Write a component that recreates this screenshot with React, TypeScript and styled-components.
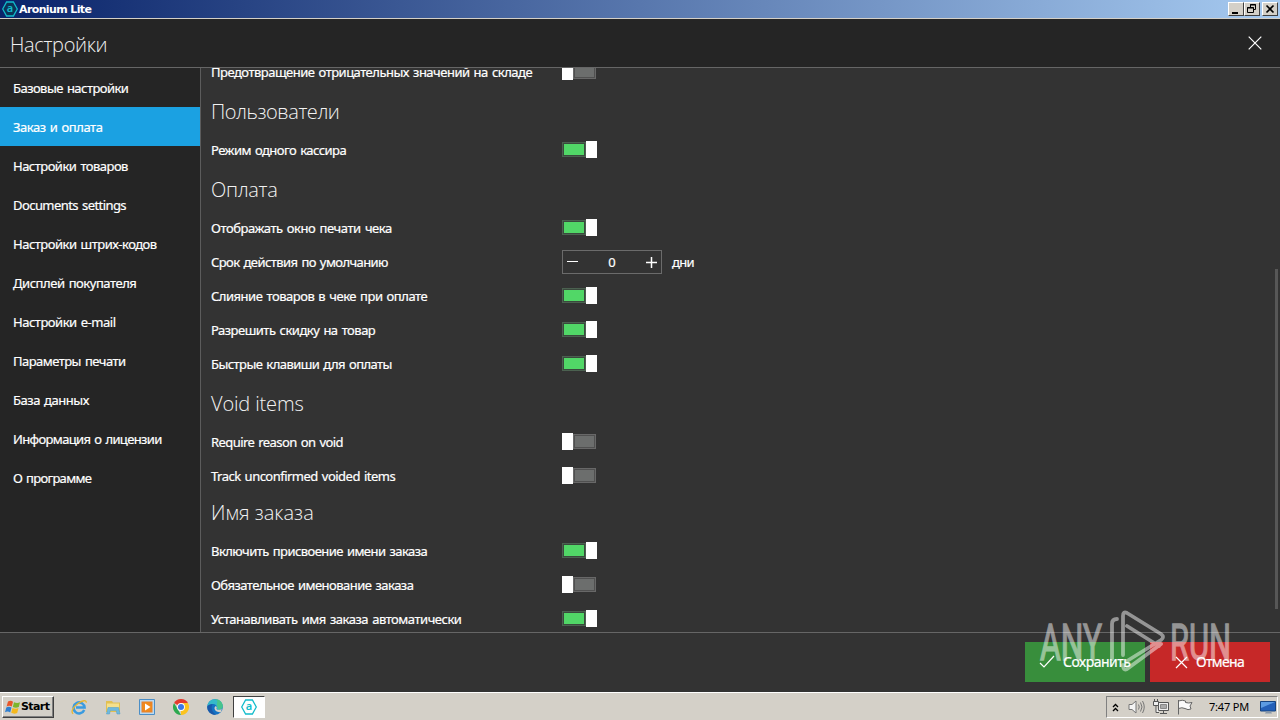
import React from "react";
import styled, { createGlobalStyle } from "styled-components";

const Global = createGlobalStyle`
  *{box-sizing:border-box}
  body{margin:0;background:#333;overflow:hidden}
`;
const ui = `"Noto Sans","Open Sans",sans-serif`;
const light = `"Open Sans","Noto Sans",sans-serif`;

const Screen = styled.div`width:1280px;height:720px;display:flex;flex-direction:column;background:#333;color:#fff;font:13px/18px ${ui};overflow:hidden;`;
const Fit = styled.span<{ $ls?: number }>`white-space:nowrap;letter-spacing:${p => p.$ls ?? 0}px;`;
const Crisp = styled(Fit)`-webkit-text-stroke:0.2px #fff;word-spacing:1.2px;`;

/* Widens the gaps between words and takes the same amount back from the letters. */
const Text = ({ ls = 0, children }: { ls?: number; children: string }) => (
  <Crisp $ls={ls - ((children.split(" ").length - 1) * 1.2) / children.length}>{children}</Crisp>
);

const TitleBar = styled.div`height:19px;flex:none;display:flex;align-items:center;padding:0 2px 0;gap:1px;background:linear-gradient(90deg,#0a246a,#a6caf0);border-bottom:1px solid #d4d0c8;`;
const TitleText = styled.div`flex:1;padding-top:1px;font:bold 11px/16px "DejaVu Sans",${ui};`;
const WinButtons = styled.div`display:flex;height:14px;`;
const WinButton = styled.div<{ $gap?: boolean }>`width:16px;height:14px;margin-left:${p => (p.$gap ? 2 : 0)}px;background:#d4d0c8;border:1px solid;border-color:#fff #404040 #404040 #fff;display:flex;`;

const Header = styled.div`height:49px;flex:none;background:#252525;border-bottom:1px solid #666;display:flex;justify-content:space-between;align-items:flex-start;padding:12px 18px 0 10px;`;
const PageTitle = styled.div`font:300 20px/28px ${light};color:#f0f0f0;`;
const CloseIcon = styled.svg`margin-top:5px;`;
const Middle = styled.div`height:564px;flex:none;display:flex;`;
const Nav = styled.div`width:201px;background:#252525;border-right:1px solid #5c5c5c;display:flex;flex-direction:column;`;
const NavItem = styled.div<{ $active?: boolean }>`height:39px;width:200px;padding:1px 0 0 13px;display:flex;align-items:center;background:${p => (p.$active ? "#1ba1e2" : "transparent")};`;
const Content = styled.div`flex:1;padding-left:10px;overflow:hidden;display:flex;flex-direction:column;`;
const Heading = styled.div<{ $tight?: boolean }>`height:${p => (p.$tight ? 41 : 44)}px;padding:${p => (p.$tight ? "0 0 2px" : "2px 0 0")};flex:none;display:flex;align-items:center;font:300 20px/28px ${light};color:#f2f2f2;`;
const Row = styled.div<{ $first?: boolean }>`height:34px;margin-top:${p => (p.$first ? -13 : 0)}px;flex:none;display:flex;align-items:center;`;
const Label = styled.div`width:351px;`;
const Toggle = styled.div<{ $on: boolean }>`width:${p => (p.$on ? 35 : 34)}px;height:17px;margin-top:-2px;display:flex;align-items:center;flex-direction:${p => (p.$on ? "row" : "row-reverse")};`;
const Track = styled.div<{ $on: boolean }>`flex:1;height:15px;border:1px solid ${p => (p.$on ? "#4b6150" : "#686868")};box-shadow:inset 0 0 0 1px ${p => (p.$on ? "#3a493d" : "#505050")};background:${p => (p.$on ? "#51d767" : "#6c6e6d")};`;
const Thumb = styled.div`width:11px;height:17px;background:#fff;`;
const Stepper = styled.div`width:100px;height:24px;border:1px solid #6b6b6b;display:flex;align-items:center;justify-content:space-between;padding:0 4px;margin-right:10px;`;
const ScrollBar = styled.div`width:3px;height:340px;margin-top:201px;background:#575757;margin-right:2px;`;

const Footer = styled.div`height:60px;flex:none;border-top:1px solid #666;display:flex;justify-content:flex-end;padding:9px 10px 0;gap:5px;position:relative;`;
const Action = styled.div<{ $bg: string; $pad: number }>`width:120px;height:40px;background:${p => p.$bg};display:flex;align-items:center;gap:8px;padding-left:${p => p.$pad}px;font-size:14px;`;
const Watermark = styled.svg`position:absolute;left:1030px;top:-28px;opacity:.48;`;

const TaskBar = styled.div`height:28px;flex:none;background:#d4d0c8;border-top:1px solid #fff;display:flex;align-items:center;padding:1px 0 0 2px;`;
const Start = styled.div`width:52px;height:22px;border:1px solid;border-color:#fff #404040 #404040 #fff;box-shadow:inset -1px -1px #808080;color:#000;display:flex;align-items:center;padding-left:1px;font:bold 11px/18px "DejaVu Sans",sans-serif;`;
const Quick = styled.div`display:flex;align-items:center;gap:18px;margin-left:17px;`;
const Task = styled.div`width:32px;height:22px;margin-left:10px;background:#fff;border:1px solid;border-color:#404040 #fff #fff #404040;display:flex;align-items:center;justify-content:center;`;
const Tray = styled.div`width:172px;height:22px;margin-left:auto;margin-right:2px;border:1px solid;border-color:#808080 #fff #fff #808080;display:flex;align-items:center;color:#000;font-size:11px;padding:0 1px 0 5px;`;
const TrayIcons = styled.div`display:flex;align-items:center;gap:8px;`;
const Clock = styled.div`width:51px;margin-left:16px;`;

const Hex = ({ size, title }: { size: number; title?: boolean }) => (
  <svg width={size} height={size} viewBox="0 0 16 16">
    <path d="M4.6 1h6.8L15.3 8l-3.9 7H4.6L.7 8z" fill={title ? "#0b3458" : "none"} stroke="#12bccb" strokeWidth="1.3" />
    <text x="8" y="11.3" textAnchor="middle" fontFamily="Noto Sans" fontSize="11" fontWeight="600" fill="#12bccb">a</text>
  </svg>
);

const WindowsFlag = () => (
  <svg width="17" height="17" viewBox="0 0 17 17">
    <path d="M4 2.5Q7 1 9 2.8L7.8 7.6Q5.5 6 2.6 7.4z" fill="#e8562a" />
    <path d="M10 3.2q3 1.6 6 .1L14.8 8q-3 1.5-6-.1z" fill="#7db52c" />
    <path d="M2.3 8.4Q5 7 7.5 8.6L6.2 13.4Q3.8 11.9 1 13.2z" fill="#2f7fd0" />
    <path d="M8.5 9q3 1.6 6 .1L13.2 13.9q-3 1.5-6-.1z" fill="#f5b81c" />
  </svg>
);
const Explorer = () => (
  <svg width="16" height="16" viewBox="0 0 16 16" fill="none">
    <path d="M13.2 11A5.5 5.5 0 1 1 13.6 8.6H5" stroke="#3a9be0" strokeWidth="2.5" />
    <path d="M2.2 14.8C-.5 13 2 8 7 4.5s8.500-3.600 8.300-.8" stroke="#e8b630" strokeWidth="1.3" />
  </svg>
);
const Folder = () => (
  <svg width="16" height="16" viewBox="0 0 16 16">
    <path d="M1 2h6l1 1.500h7V13H1z" fill="#e2c052" />
    <path d="M2 4.500h12V12H2z" fill="#f5e08c" />
    <path d="M3 8.500h10.500L15 15h-3l-.8-3.500H5.300L4.500 15h-3z" fill="#6fb9de" stroke="#4f9bc4" strokeWidth=".5" />
  </svg>
);
const Player = () => (
  <svg width="16" height="16" viewBox="0 0 16 16">
    <path d="M.5.5h15v15H.5z" fill="#b9d9f2" stroke="#4b8ec6" />
    <path d="M2.5 2.5h11v11h-11z" fill="#e9822a" />
    <circle cx="8" cy="8" r="5" fill="#f08a1c" />
    <path d="M6 4.500L11.500 8 6 11.500z" fill="#fff" />
  </svg>
);
const Chrome = () => (
  <svg width="16" height="16" viewBox="0 0 16 16">
    <path d="M8 8L1.07 4A8 8 0 0 1 14.93 4z" fill="#e33b2e" />
    <path d="M8 8L14.93 4A8 8 0 0 1 8 16z" fill="#fcc31e" />
    <path d="M8 4h6.930l-3 5z" fill="#fcc31e" />
    <path d="M1.07 4L4.600 10 8 16a8 8 0 0 1-6.930-12z" fill="#2da94f" />
    <circle cx="8" cy="8" r="3.9" fill="#fff" /><circle cx="8" cy="8" r="3" fill="#3b78e7" />
  </svg>
);
const Edge = () => (
  <svg width="16" height="16" viewBox="0 0 16 16">
    <circle cx="8" cy="8" r="7.8" fill="#1372c4" />
    <path d="M.3 7.500C1 2 5 .2 8 .2c5 0 7.800 3.600 7.800 6.800 0 2.500-2 3.800-4.200 3.800-1.600 0-2.600-.6-2-1.500C10.600 7.500 9 5 6 5 3.500 5 1 6 .3 7.500z" fill="#35b9c9" />
    <path d="M8 .2c5 0 7.800 3.600 7.800 6.800 0 2.500-2 3.800-4.200 3.800L10 7C9.500 3 12 2 8 .2z" fill="#4fc877" opacity=".75" />
    <path d="M9.600 9.300c-.6.9.4 1.500 2 1.500 1.400 0 2.600-.4 3.300-1.100l-.9 3.300c-3 .8-6.500-1-6.500-3.700 0-1 .6-1.900 1.300-2.300.8.500 1.300 1.400.8 2.300z" fill="#d4d0c8" />
    <path d="M.3 7.500C1 6 3.500 5 6 5 4 6.500 3.500 12 9 15.800 3.500 16 0 12 .3 7.500z" fill="#1a58a8" />
  </svg>
);

const nav: [string, number][] = [["Базовые настройки", -.47], ["Заказ и оплата", -.28], ["Настройки товаров", -.45], ["Documents settings", -.5], ["Настройки штрих-кодов", -.44], ["Дисплей покупателя", -.39], ["Настройки e-mail", -.41], ["Параметры печати", -.46], ["База данных", -.35], ["Информация о лицензии", -.52], ["О программе", -.6]];

const Setting = ({ text, on, ls, first }: { text: string; on?: boolean; ls: number; first?: boolean }) => (
  <Row $first={first}><Label><Text ls={ls}>{text}</Text></Label><Toggle $on={!!on}><Track $on={!!on} /><Thumb /></Toggle></Row>
);

export default function App() {
  return (
    <Screen>
      <Global />
      <TitleBar>
        <Hex size={16} title />
        <TitleText><Fit $ls={-.62}>Aronium Lite</Fit></TitleText>
        <WinButtons>
          <WinButton><svg width="14" height="12"><path d="M3 9h6v2H3z" /></svg></WinButton>
          <WinButton><svg width="14" height="12" fill="none" stroke="#000"><path d="M5.5 4V1.5h5v5H9M5 2h6M2.5 4.5h6v5h-6zM2 5h7" /></svg></WinButton>
          <WinButton $gap><svg width="14" height="12"><path d="M3.5 2.5l7 7m0-7l-7 7" stroke="#000" strokeWidth="1.7" /></svg></WinButton>
        </WinButtons>
      </TitleBar>
      <Header>
        <PageTitle><Fit $ls={-.33}>Настройки</Fit></PageTitle>
        <CloseIcon width="14" height="14"><path d="M.7.7l12.6 12.6m0-12.6L.7 13.3" stroke="#fff" strokeWidth="1.2" /></CloseIcon>
      </Header>
      <Middle>
        <Nav>{nav.map(([t, ls], i) => <NavItem key={t} $active={i === 1}><Text ls={ls}>{t}</Text></NavItem>)}</Nav>
        <Content>
          <Setting first text="Предотвращение отрицательных значений на складе" ls={-.4} />
          <Heading><Fit $ls={-.45}>Пользователи</Fit></Heading>
          <Setting text="Режим одного кассира" on ls={-.42} />
          <Heading><Fit $ls={-.3}>Оплата</Fit></Heading>
          <Setting text="Отображать окно печати чека" on ls={-.3} />
          <Row>
            <Label><Text ls={-.44}>Срок действия по умолчанию</Text></Label>
            <Stepper>
              <svg width="11" height="11"><path d="M0 4.5h11" stroke="#fff" /></svg>
              <Text>0</Text>
              <svg width="11" height="11"><path d="M0 5.5h11M5.5 0v11" stroke="#fff" strokeWidth="1.5" /></svg>
            </Stepper>
            <Text ls={-.7}>дни</Text>
          </Row>
          <Setting text="Слияние товаров в чеке при оплате" on ls={-.3} />
          <Setting text="Разрешить скидку на товар" on ls={-.36} />
          <Setting text="Быстрые клавиши для оплаты" on ls={-.42} />
          <Heading><Fit $ls={-.15}>Void items</Fit></Heading>
          <Setting text="Require reason on void" ls={-.41} />
          <Setting text="Track unconfirmed voided items" ls={-.4} />
          <Heading $tight><Fit>Имя заказа</Fit></Heading>
          <Setting text="Включить присвоение имени заказа" on ls={-.44} />
          <Setting text="Обязательное именование заказа" ls={-.44} />
          <Setting text="Устанавливать имя заказа автоматически" on ls={-.38} />
        </Content>
        <ScrollBar />
      </Middle>
      <Footer>
        <Action $bg="#388e3c" $pad={14}><svg width="16" height="14" fill="none" stroke="#fff" strokeWidth="1.2"><path d="M1 8l4 4L15 1" /></svg><Text ls={-.5}>Сохранить</Text></Action>
        <Action $bg="#c62828" $pad={25}><svg width="13" height="13" stroke="#fff" strokeWidth="1.2"><path d="M1 1l11 11m0-11L1 12" /></svg><Text ls={-.65}>Отмена</Text></Action>
        <Watermark width="210" height="72" viewBox="0 0 210 72">
          <g fill="#fff" stroke="#fff" strokeWidth="1.3" fontFamily="Roboto" fontSize="50">
            <text x="10" y="55" textLength="62" lengthAdjust="spacingAndGlyphs">ANY</text>
            <text x="140" y="55" textLength="61" lengthAdjust="spacingAndGlyphs">RUN</text>
          </g>
          <g fill="none" stroke="#fff" strokeWidth="3.8" strokeLinecap="round" strokeLinejoin="round">
            <path d="M82 54V19q0-5 5-5" />
            <path d="M93 50V11q0-5 4-3L131 29q4 3 0 6L97 56M97 21L129 41M131 39L97 64q-4 2-4-4" />
          </g>
        </Watermark>
      </Footer>
      <TaskBar>
        <Start><WindowsFlag /><Fit $ls={-.6}>Start</Fit></Start>
        <Quick><Explorer /><Folder /><Player /><Chrome /><Edge /></Quick>
        <Task><Hex size={16} /></Task>
        <Tray>
          <TrayIcons>
            <svg width="8" height="9" fill="none" stroke="#000" strokeWidth="1.3"><path d="M1 4l2.5-2.5L6 4M1 8l2.5-2.5L6 8" /></svg>
            <svg width="17" height="16" viewBox="0 0 17 16" fill="#f4f4f4" stroke="#777"><path d="M1 5.5h3L8 2v12l-4-3.5H1z" /><path d="M10.5 5.5q1.5 2.5 0 5M12.5 3.5q3 4.5 0 9M14.5 2q3.5 6 0 12" fill="none" /></svg>
            <svg width="16" height="16" viewBox="0 0 16 16" fill="#eee" stroke="#555"><path d="M5.5 3.5h10v8h-10zM7 14.5h7M10.5 12v2" /><path d="M7.5 5.5h6v4h-6z" fill="#aaa" stroke="#888" /><path d="M.5 2.5h5v4h-5zM1.5 0v2M4.500 0v2M3 6.500v7h3" /></svg>
            <svg width="16" height="16" viewBox="0 0 16 16" fill="#fafafa" stroke="#666"><path d="M1.5 1v14.5M1.5 2q4-1.5 7 0v1.5q3 1 6.500 0L13 7l1 3q-3 1.500-6-.5-3-1.500-6.500 0z" /></svg>
          </TrayIcons>
          <Clock><Fit $ls={-.2}>7:47 PM</Fit></Clock>
          <svg width="16" height="16" viewBox="0 0 16 16"><path d="M.5 2.5h15v9.500H.5z" fill="#2460b8" stroke="#174480" /><path d="M1 3h14L1 9z" fill="#5c9be2" /><path d="M6 12.500h5l1 2H5z" fill="#8a98a8" /></svg>
        </Tray>
      </TaskBar>
    </Screen>
  );
}
